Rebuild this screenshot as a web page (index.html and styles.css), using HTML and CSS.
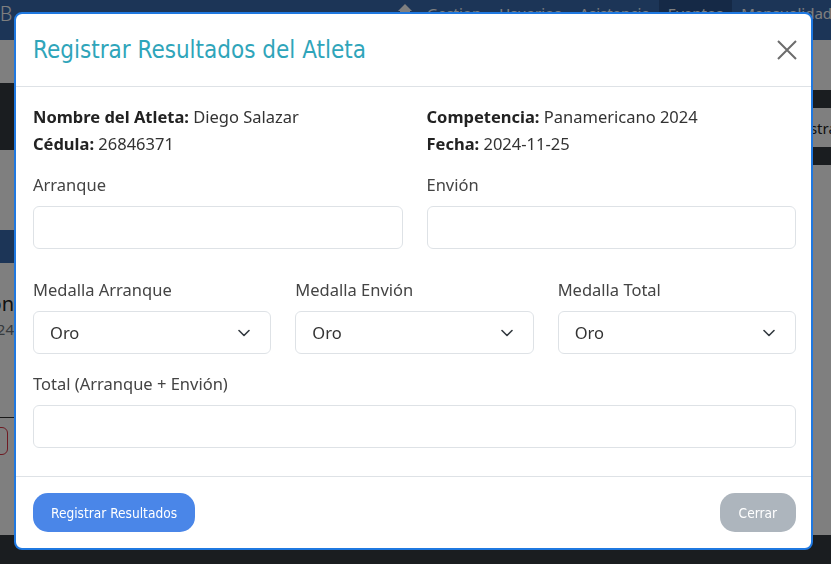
FILE: index.html
```html
<!DOCTYPE html>
<html lang="es">
<head>
<meta charset="utf-8">
<title>Registrar Resultados</title>
<link rel="stylesheet" href="styles.css">
</head>
<body>
<div class="page">
  <header class="topbar">
    <span class="brand">B</span>
    <nav class="menu">
      <span class="menu-icon"><svg width="14" height="12" viewBox="0 0 14 12"><path d="M7 0 L14 7 L0 7 Z" fill="currentColor"/><rect x="2" y="7" width="10" height="5" fill="currentColor"/></svg></span>
      <span class="menu-item">Gestion</span>
      <span class="menu-item">Usuarios</span>
      <span class="menu-item">Asistencia</span>
      <span class="menu-item active">Eventos</span>
      <span class="menu-item">Mensualidad</span>
    </nav>
  </header>
  <main class="content">
    <div class="col-left">
      <div class="band"></div>
      <div class="card">
        <div class="card-head"></div>
        <div class="card-body">
          <div class="card-title">Competición</div>
          <div class="card-date">Panamericano 2024</div>
        </div>
        <div class="card-foot"><span class="btn-out">Eliminar</span></div>
      </div>
    </div>
    <div class="col-mid"></div>
    <div class="col-right">
      <div class="thead"></div>
      <div class="trow"><span class="btn-reg">Registrar</span></div>
      <div class="thead"></div>
    </div>
  </main>
  <footer class="pagefoot"></footer>
</div>

<div class="backdrop"></div>

<div class="modal" role="dialog">
  <div class="modal-header">
    <h2 class="modal-title">Registrar Resultados del Atleta</h2>
    <button class="close" type="button" aria-label="Cerrar">
      <svg width="20" height="20" viewBox="0 0 20 20"><path d="M1 1 L19 19 M19 1 L1 19" stroke="#6c6c6c" stroke-width="2" fill="none"/></svg>
    </button>
  </div>
  <div class="modal-body">
    <div class="info">
      <div>
        <p><b>Nombre del Atleta:</b> Diego Salazar</p>
        <p><b>Cédula:</b> 26846371</p>
      </div>
      <div>
        <p><b>Competencia:</b> Panamericano 2024</p>
        <p><b>Fecha:</b> 2024-11-25</p>
      </div>
    </div>
    <div class="row2">
      <label class="field"><span class="lbl">Arranque</span><input class="ctrl" type="text"></label>
      <label class="field"><span class="lbl">Envión</span><input class="ctrl" type="text"></label>
    </div>
    <div class="row3">
      <label class="field"><span class="lbl">Medalla Arranque</span>
        <span class="sel"><select class="ctrl"><option>Oro</option><option>Plata</option><option>Bronce</option></select>
        <svg class="chev" width="12" height="8" viewBox="0 0 12 8"><path d="M1 1.5l5 5 5-5" stroke="#343a40" stroke-width="1.6" fill="none" stroke-linecap="round" stroke-linejoin="round"/></svg></span>
      </label>
      <label class="field"><span class="lbl">Medalla Envión</span>
        <span class="sel"><select class="ctrl"><option>Oro</option><option>Plata</option><option>Bronce</option></select>
        <svg class="chev" width="12" height="8" viewBox="0 0 12 8"><path d="M1 1.5l5 5 5-5" stroke="#343a40" stroke-width="1.6" fill="none" stroke-linecap="round" stroke-linejoin="round"/></svg></span>
      </label>
      <label class="field"><span class="lbl">Medalla Total</span>
        <span class="sel"><select class="ctrl"><option>Oro</option><option>Plata</option><option>Bronce</option></select>
        <svg class="chev" width="12" height="8" viewBox="0 0 12 8"><path d="M1 1.5l5 5 5-5" stroke="#343a40" stroke-width="1.6" fill="none" stroke-linecap="round" stroke-linejoin="round"/></svg></span>
      </label>
    </div>
    <label class="field total"><span class="lbl">Total (Arranque + Envión)</span><input class="ctrl" type="text"></label>
  </div>
  <div class="modal-footer">
    <button class="btn btn-primary" type="button">Registrar Resultados</button>
    <button class="btn btn-secondary" type="button">Cerrar</button>
  </div>
</div>
</body>
</html>
```

FILE: styles.css
```css
* { box-sizing: border-box; }
html, body { margin: 0; padding: 0; }
body {
  font-family: "Noto Sans", "Open Sans", sans-serif;
  background: #fff;
  overflow: hidden;
}

/* ---------- background page ---------- */
.page {
  height: 564px;
  display: flex;
  flex-direction: column;
}
.topbar {
  height: 40px;
  flex: none;
  background: #386aae;
  display: flex;
  align-items: stretch;
  color: #fff;
  overflow: hidden;
}
.brand {
  flex: none;
  font-size: 20px;
  line-height: 28px;
  width: 395px;
  font-weight: 300;
  font-family: "Liberation Sans Narrow", "Roboto", sans-serif;
}
.menu {
  flex: none;
  display: flex;
  align-items: stretch;
  font-size: 15px;
}
.menu-icon {
  display: flex;
  align-items: flex-start;
  padding: 4px 6px 0 3px;
}
.menu-item {
  padding: 3px 9px 0;
  white-space: nowrap;
}
.menu-item.active { background: #2b528c; }

.content {
  flex: 1;
  display: grid;
  grid-template-columns: 15px 1fr 60px;
}
.col-left {
  overflow: hidden;
  display: flex;
  flex-direction: column;
  align-items: flex-end;
}
.band {
  width: 300px;
  height: 67px;
  margin-top: 43px;
  background: #343a40;
  flex: none;
}
.card {
  width: 300px;
  margin-top: 80px;
  flex: none;
}
.card-head { height: 33px; background: #386aae; }
.card-body {
  height: 155px;
  text-align: right;
  padding: 28px 1px 0 0;
  border-bottom: 1px solid #333;
}
.card-title { font-size: 20px; line-height: 26px; color: #222; }
.card-date { font-size: 15px; line-height: 24px; color: #6c757d; }
.card-foot {
  display: flex;
  justify-content: flex-end;
  padding: 9px 7px 0 0;
}
.btn-out {
  border: 1px solid #dc3545;
  border-radius: 6px;
  color: #dc3545;
  font-size: 14px;
  line-height: 26px;
  padding: 0 10px;
}
.col-right {
  overflow: hidden;
  padding-top: 50px;
}
.thead { height: 18px; background: #343a40; }
.trow {
  height: 39px;
  display: flex;
  align-items: center;
  padding-left: 8px;
  font-size: 15px;
  color: #222;
}
.btn-reg { white-space: nowrap; }
.pagefoot { height: 29px; background: #343a40; flex: none; }

.backdrop {
  position: fixed;
  inset: 0;
  background: rgba(0, 0, 0, 0.5);
}

/* ---------- modal ---------- */
.modal {
  position: fixed;
  left: 14px;
  top: 12px;
  width: 799px;
  height: 538px;
  background: #fff;
  border: 2px solid #1f78e0;
  border-radius: 8px;
  display: flex;
  flex-direction: column;
  color: #333;
}
.modal-header {
  height: 73px;
  flex: none;
  border-bottom: 1px solid #dee2e6;
  display: flex;
  align-items: center;
  justify-content: space-between;
  padding: 0 14px 0 17px;
}
.modal-title {
  margin: 0;
  font-family: "Liberation Sans Narrow", "DejaVu Sans Condensed", "Roboto", sans-serif;
  font-weight: normal;
  font-size: 24px;
  color: #2fa5ba;
  line-height: 36px;
}
.close {
  border: 0;
  background: none;
  padding: 0;
  width: 20px;
  height: 20px;
  display: flex;
  cursor: pointer;
}
.modal-body {
  flex: none;
  height: 389px;
  padding: 16px 15px 0 17px;
  display: flex;
  flex-direction: column;
  font-size: 16.5px;
}
.info {
  display: grid;
  grid-template-columns: 1fr 1fr;
  column-gap: 24px;
}
.info p {
  margin: 0;
  line-height: 27px;
  color: #333;
}
.info b { color: #222; font-weight: 700; }

.row2 {
  margin-top: 16px;
  display: grid;
  grid-template-columns: 1fr 1fr;
  column-gap: 24px;
}
.row3 {
  margin-top: 29px;
  display: grid;
  grid-template-columns: 1fr 1fr 1fr;
  column-gap: 24px;
}
.field {
  display: flex;
  flex-direction: column;
}
.total { margin-top: 18px; }
.lbl {
  line-height: 24px;
  margin-bottom: 9px;
  color: #444;
}
.ctrl {
  height: 43px;
  width: 100%;
  border: 1px solid #dee2e6;
  border-radius: 6px;
  background: #fff;
  font-family: inherit;
  font-size: 16.5px;
  color: #333;
  padding: 0 16px;
  outline: none;
}
.sel { position: relative; display: block; }
.sel select {
  appearance: none;
  -webkit-appearance: none;
  display: block;
}
.chev {
  position: absolute;
  right: 21px;
  top: 18px;
  pointer-events: none;
}

.modal-footer {
  flex: 1;
  display: flex;
  justify-content: space-between;
  align-items: flex-start;
  border-top: 1px solid #dee2e6;
  padding: 16px 15px 0 17px;
}
.btn {
  height: 39px;
  border: 0;
  border-radius: 15px;
  color: #fff;
  font-family: "Liberation Sans Narrow", "DejaVu Sans Condensed", "Roboto", sans-serif;
  font-size: 13.6px;
  padding: 0 18px;
  cursor: pointer;
}
.btn-primary { background: #4a86e8; }
.btn-secondary { background: #adb5bd; padding: 0 19px; }
```
